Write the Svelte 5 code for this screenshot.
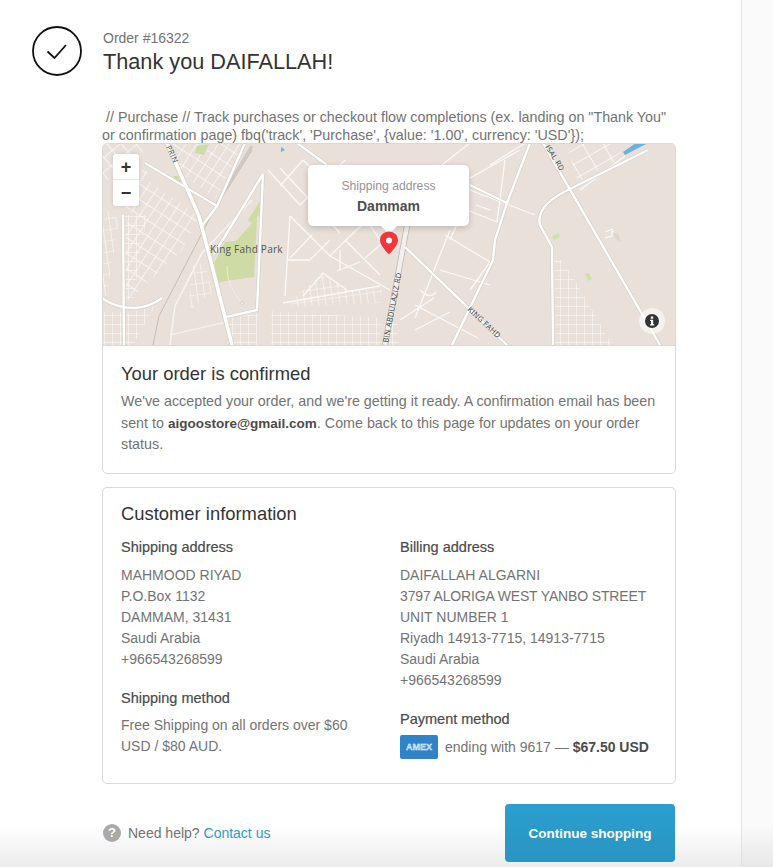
<script>
  const roadsThick = [
    "M167 143L199 216L212 266L232 345"
  ];
  const roadsMedium = [
    "M263 174L214 254M263 174L257 310L226 317",
    "M530 143L507 203L495 240L493 260L452 345",
    "M648 150L572 188Q535 205 540 225L552 247L553 345",
    "M543 143L660 345",
    "M405 247L507 345",
    "M102 298Q115 308 135 308Q150 307 162 298",
    "M145 163L217 206L202 226",
    "M245 143L217 206",
    "M123 215L124 345",
    "M297 143L327 165M470 185L507 203"
  ];
  const blocks = [
    { d: "M147 180L199 216L182 250L152 278L138 292L126 300V225L140 190Z", fill: "url(#g1)" },
    { d: "M102 205L119 220L112 262L107 296L102 296Z", fill: "url(#g2)" },
    { d: "M125 215H147L133 300H125Z", fill: "url(#g3)" },
    { d: "M102 312L122 312V345H102ZM126 314L155 306L133 345H126Z", fill: "url(#g3)" },
    { d: "M173 143L243 143L216 198L179 173Z", fill: "url(#g1)" },
    { d: "M102 143H150L128 172L102 182Z", fill: "url(#g4)" },
    { d: "M120 190L148 165L146 178L128 215Z", fill: "url(#g1)" },
    { d: "M271 311L382 318L380 345H271Z", fill: "url(#g3)" },
    { d: "M295 297L323 273L347 290L382 290L380 303L290 307Z", fill: "url(#g2)" },
    { d: "M227 319L257 313L257 345H227Z", fill: "url(#g3)" },
    { d: "M554 252L572 275L612 345H555Z", fill: "url(#g3)" },
    { d: "M190 266L205 262L212 292L190 310Z", fill: "url(#g2)" },
    { d: "M566 143L612 143L625 156L578 183Z", fill: "url(#g5)" },
    { d: "M385 330L398 316V345H385Z", fill: "url(#g3)" }
  ];
  const streets = [
    "M280 186L303 160M280 168L340 233M290 216L330 256L350 236M287 260H310M290 216L285 296",
    "M330 256L390 290M337 271L360 262M283 303L380 286M268 170L300 205M303 160L370 225",
    "M325 180L345 160M340 195L368 170M355 215L378 195M300 205L325 180M315 222L340 195",
    "M350 236L395 195M370 225L380 240M345 240L380 275M365 258L395 232M310 260L330 240M312 235L290 258",
    "M340 270L340 250M303 296L323 273L347 290",
    "M470 190L535 215M420 182L470 143M470 178L520 150M490 165L525 143M430 195L497 222M445 235L490 262",
    "M450 230L415 318M465 206L450 240M490 262L470 290M415 305L478 338M400 320L434 298M440 270L490 285",
    "M420 290Q430 300 436 292M415 330L450 312",
    "M505 160L497 222M476 205L490 210",
    "M580 190L625 156"
  ];
</script>

<div class="page">
  <main class="main">
    <header class="head">
      <svg class="tick" viewBox="0 0 50 50" aria-hidden="true">
        <circle cx="25" cy="25" r="24" fill="none" stroke="#111" stroke-width="1.8"/>
        <path d="M15.500 25.500l7 6.500 11.500-13" fill="none" stroke="#111" stroke-width="1.8"/>
      </svg>
      <div>
        <div class="order">Order #16322</div>
        <h1>Thank you DAIFALLAH!</h1>
      </div>
    </header>

    <p class="pixel">&nbsp;// Purchase // Track purchases or checkout flow completions (ex. landing on "Thank You" or confirmation page) fbq('track', 'Purchase', &#123;value: '1.00', currency: 'USD'&#125;);</p>

    <section class="card first">
      <div class="map">
        <svg class="mapsvg" viewBox="102 143 574 202" preserveAspectRatio="none" aria-hidden="true">
          <defs>
            <pattern id="g1" width="9" height="13" patternUnits="userSpaceOnUse" patternTransform="rotate(33)">
              <path d="M0 0H9M0 0V13" stroke="#fdfbfa" stroke-width="1.400" fill="none"/>
            </pattern>
            <pattern id="g2" width="7" height="11" patternUnits="userSpaceOnUse" patternTransform="rotate(-8)">
              <path d="M0 0H7M0 0V11" stroke="#fdfbfa" stroke-width="1.200" fill="none"/>
            </pattern>
            <pattern id="g3" width="8" height="9" patternUnits="userSpaceOnUse">
              <path d="M0 0H8M0 0V9" stroke="#fdfbfa" stroke-width="1.100" fill="none"/>
            </pattern>
            <pattern id="g4" width="11" height="11" patternUnits="userSpaceOnUse" patternTransform="rotate(-40)">
              <path d="M0 0H11M0 0V11" stroke="#fdfbfa" stroke-width="1.600" fill="none"/>
            </pattern>
            <pattern id="g5" width="18" height="13" patternUnits="userSpaceOnUse" patternTransform="rotate(-30)">
              <path d="M0 0H18M0 0V13" stroke="#fdfbfa" stroke-width="1.600" fill="none"/>
            </pattern>
          </defs>
          <rect x="102" y="143" width="574" height="202" fill="#e8e0d9"/>
          {#each blocks as b}
            <path d={b.d} fill={b.fill}/>
          {/each}
          {#each streets as d}
            <path {d} stroke="#fbf9f7" stroke-width="1.300" fill="none"/>
          {/each}

          <path d="M197 146l12-2-5 11-9-2zM173 176l5 0 3 6-4 1z" fill="#cfdba4"/>
          <path d="M262 198L248 220L252 224L261 212Z" fill="#cfdba4"/>
          <path d="M257 218L254 277L225 281L219 283L214 263L225 242L236 241Z" fill="#cfdba4"/>
          <path d="M227 266Q226 285 242 303" fill="none" stroke="#f2efe9" stroke-width="0.800"/>
          <circle cx="242" cy="303" r="1.500" fill="#f7f4f1" stroke="#bbb" stroke-width="0.500"/>
          <path d="M552 236l6-3 2 4-6 3zM585 274l4-1 3 6-4 2z" fill="#cfe3a8"/>
          <path d="M613 233l5 1 3 8-4-2z" fill="#dfd3c5"/>
          <path d="M605 232l7-3 1 3M605 238l7-2v-5" fill="none" stroke="#fff" stroke-width="1"/>
          <path d="M625 155L648 143H636L623 152Z" fill="#6ab0e0"/>
          <path d="M281 147l4 3-4 2z" fill="#6ab0e0"/>

          <g fill="none">
            <path d="M252 150L214 210L159 316L153 345" stroke="#c4bcb5" stroke-width="1"/>
            <path d="M252 146L216 205" stroke="#cfc7c0" stroke-width="3"/>
            <path d="M252 200L202 253L175 306L170 345" stroke="#f7f4f1" stroke-width="1.500"/>
            <path d="M226 322L170 335" stroke="#f7f4f1" stroke-width="1.200"/>
            {#each roadsMedium as d}
              <path {d} stroke="#d3ccc5" stroke-width="3.600"/>
            {/each}
            {#each roadsThick as d}
              <path {d} stroke="#d3ccc5" stroke-width="5"/>
            {/each}
            <path d="M407 226L385 345" stroke="#bcb5ae" stroke-width="6"/>
            {#each roadsMedium as d}
              <path {d} stroke="#fff" stroke-width="2.400"/>
            {/each}
            {#each roadsThick as d}
              <path {d} stroke="#fff" stroke-width="3.600"/>
            {/each}
            <path d="M407 226L385 345" stroke="#f2efec" stroke-width="4.500"/>
          </g>
          <text class="park" x="210" y="253">King Fahd Park</text>
          <text class="road" transform="translate(166 147) rotate(65)">PRIN</text>
          <text class="road" transform="translate(545 147) rotate(58)">ISAL RD</text>
          <text class="road" transform="translate(388 343) rotate(-79)">BIN ABDULAZIZ RD</text>
          <text class="road" transform="translate(467 310) rotate(43)">KING FAHD</text>
        </svg>

        <div class="zoom">
          <span>+</span>
          <span>−</span>
        </div>

        <div class="bubble">
          <div class="bubble-label">Shipping address</div>
          <div class="bubble-city">Dammam</div>
        </div>

        <svg class="pin" viewBox="0 0 20 24" aria-hidden="true">
          <path d="M10 .5C4.800.5 1 4.400 1 9.200c0 4.600 5.600 10.600 9 14.300 3.400-3.700 9-9.700 9-14.300C19 4.400 15.200.5 10 .5z" fill="#f0383c"/>
          <circle cx="10" cy="9.500" r="3" fill="#fff"/>
        </svg>

        <div class="info">
          <svg viewBox="0 0 14 14" aria-hidden="true">
            <circle cx="7" cy="7" r="7" fill="#333"/>
            <rect x="5.800" y="2.500" width="2.400" height="2.200" fill="#fff"/>
            <path d="M5 5.800h3.200v4.400h1v1.300H5v-1.300h1V7.100H5z" fill="#fff"/>
          </svg>
        </div>
      </div>
      <div class="confirm">
        <h2>Your order is confirmed</h2>
        <p>We've accepted your order, and we're getting it ready. A confirmation email has been sent to <b class="mail">aigoostore@gmail.com</b>. Come back to this page for updates on your order status.</p>
      </div>
    </section>

    <section class="card info-card">
      <h2>Customer information</h2>
      <div class="cols">
        <div>
          <h3>Shipping address</h3>
          <p class="narrow">MAHMOOD RIYAD<br>P.O.Box 1132<br>DAMMAM, 31431<br>Saudi Arabia<br>+966543268599</p>
          <h3 class="next">Shipping method</h3>
          <p class="narrow after">Free Shipping on all orders over $60 USD / $80 AUD.</p>
        </div>
        <div>
          <h3>Billing address</h3>
          <p>DAIFALLAH ALGARNI<br><span class="tight">3797 ALORIGA WEST YANBO STREET</span><br>UNIT NUMBER 1<br>Riyadh 14913-7715, 14913-7715<br>Saudi Arabia<br>+966543268599</p>
          <h3 class="next">Payment method</h3>
          <div class="pay">
            <span class="amex">AMEX</span>
            <span>ending with 9617 — <b>$67.50 USD</b></span>
          </div>
        </div>
      </div>
    </section>

    <footer class="foot">
      <div class="help">
        <span class="q">?</span>
        <span>Need help? <a href="#contact">Contact us</a></span>
      </div>
      <button type="button">Continue shopping</button>
    </footer>
  </main>
  <aside class="side"></aside>
</div>

<style>
  :global(body) {
    margin: 0;
    background: #fff;
  }
  .page {
    display: flex;
    height: 867px;
    overflow: hidden;
    font-family: "Liberation Sans", Arial, sans-serif;
    font-size: 14px;
    color: #737373;
    background: linear-gradient(to bottom, #fff 0, #fff 825px, #ececec 867px);
  }
  .main {
    box-sizing: border-box;
    width: 742px;
    flex: none;
    padding: 26px 65px 0 32px;
    border-right: 1px solid #e1e1e1;
  }
  .side {
    flex: 1;
    background: rgba(0, 0, 0, 0.02);
  }
  .head {
    display: flex;
    gap: 21px;
    align-items: flex-start;
  }
  .tick {
    width: 50px;
    height: 50px;
    flex: none;
  }
  .order {
    font-size: 14px;
    line-height: 16px;
    margin-top: 4px;
  }
  h1 {
    margin: 3px 0 0;
    font-size: 21.700px;
    line-height: 26px;
    font-weight: 400;
    color: #333;
  }
  .pixel {
    margin: 32px 0 0 70px;
    line-height: 18px;
    font-size: 14.300px;
    width: 574px;
    height: 36px;
  }
  .card {
    box-sizing: border-box;
    width: 574px;
    margin-left: 70px;
    border: 1px solid #d9d9d9;
    border-radius: 5px;
    background: #fff;
  }
  .first {
    height: 331px;
    margin-top: -1px;
    overflow: hidden;
  }
  .map {
    position: relative;
    height: 202px;
    margin: -1px -1px 0;
    border-bottom: 1px solid #d9d9d9;
    overflow: hidden;
  }
  .mapsvg {
    display: block;
    width: 100%;
    height: 100%;
  }
  .park {
    font: 10px "Open Sans", sans-serif;
    fill: #555;
    letter-spacing: 0.250px;
  }
  .road {
    font: 7.500px "Open Sans", sans-serif;
    fill: #444;
    letter-spacing: 0.300px;
  }
  .zoom {
    position: absolute;
    left: 11px;
    top: 11px;
    width: 26px;
    height: 52px;
    background: #fff;
    border-radius: 3px;
    box-shadow: 0 0 4px rgba(0, 0, 0, 0.12);
    color: #333;
    font: 700 18px/26px "Liberation Sans", sans-serif;
    text-align: center;
  }
  .zoom span {
    display: block;
    height: 26px;
    box-sizing: border-box;
  }
  .zoom span:first-child {
    border-bottom: 1px solid #e6e6e6;
  }
  .bubble {
    position: absolute;
    left: 206px;
    top: 22px;
    width: 161px;
    height: 61px;
    box-sizing: border-box;
    padding-top: 13px;
    background: #fff;
    border-radius: 5px;
    box-shadow: 0 2px 6px rgba(0, 0, 0, 0.18);
    text-align: center;
  }
  .bubble::after {
    content: "";
    position: absolute;
    left: 72px;
    bottom: -8px;
    border: 9px solid transparent;
    border-bottom: 0;
    border-top-color: #fff;
  }
  .bubble-label {
    font-size: 12.200px;
    line-height: 16px;
    color: #959595;
  }
  .bubble-city {
    margin-top: 4px;
    font-size: 14px;
    line-height: 16px;
    font-weight: 700;
    color: #4f4f4f;
  }
  .pin {
    position: absolute;
    left: 277px;
    top: 88px;
    width: 20px;
    height: 24px;
  }
  .info {
    position: absolute;
    left: 537px;
    top: 165px;
    width: 26px;
    height: 26px;
    border-radius: 50%;
    background: rgba(255, 255, 255, 0.55);
    display: flex;
    align-items: center;
    justify-content: center;
  }
  .info svg {
    width: 14px;
    height: 14px;
  }
  .confirm {
    padding: 17px 18px 0;
  }
  h2 {
    margin: 0;
    font-size: 18.400px;
    line-height: 21px;
    font-weight: 400;
    color: #333;
  }
  .confirm p {
    margin: 7px 0 0;
    line-height: 21.500px;
    font-size: 14.300px;
  }
  b {
    color: #4b4b4b;
    font-weight: 700;
  }
  .mail {
    font-size: 13.500px;
  }
  .info-card {
    height: 297px;
    margin-top: 13px;
    padding: 15px 18px 0;
  }
  .cols {
    display: grid;
    grid-template-columns: 279px 1fr;
    margin-top: 15px;
  }
  h3 {
    margin: 0;
    font-size: 14.500px;
    line-height: 16px;
    font-weight: 400;
    color: #4b4b4b;
    -webkit-text-stroke: 0.200px #4b4b4b;
  }
  .cols p {
    margin: 10px 0 0;
    line-height: 21px;
  }
  .cols p.narrow {
    max-width: 250px;
  }
  .cols p.after {
    margin-top: 9px;
  }
  .tight {
    letter-spacing: -0.150px;
    white-space: nowrap;
  }
  h3.next {
    margin-top: 20px;
  }
  .pay {
    display: flex;
    align-items: center;
    gap: 7px;
    margin-top: 8px;
  }
  .amex {
    width: 38px;
    height: 24px;
    border-radius: 2px;
    background: #2f83c6;
    color: #a9cdea;
    -webkit-text-stroke: 0.300px #fff;
    font: 700 9px/24px "Liberation Sans", sans-serif;
    text-align: center;
  }
  .foot {
    display: flex;
    justify-content: space-between;
    align-items: center;
    width: 573px;
    margin: 20px 0 0 70px;
  }
  .help {
    display: flex;
    align-items: center;
    gap: 7px;
    margin-left: 1px;
  }
  .q {
    width: 18px;
    height: 18px;
    border-radius: 50%;
    background: #a9a9a9;
    color: #fff;
    font: 700 13px/18px "Liberation Sans", sans-serif;
    text-align: center;
  }
  a {
    color: #2a9dcc;
    text-decoration: none;
  }
  button {
    width: 170px;
    height: 58px;
    border: 0;
    border-radius: 4px;
    background: linear-gradient(to bottom, #2a9fcf, #2a94c3);
    color: #fff;
    font: 700 13.500px "Liberation Sans", sans-serif;
    padding: 0;
  }
</style>
